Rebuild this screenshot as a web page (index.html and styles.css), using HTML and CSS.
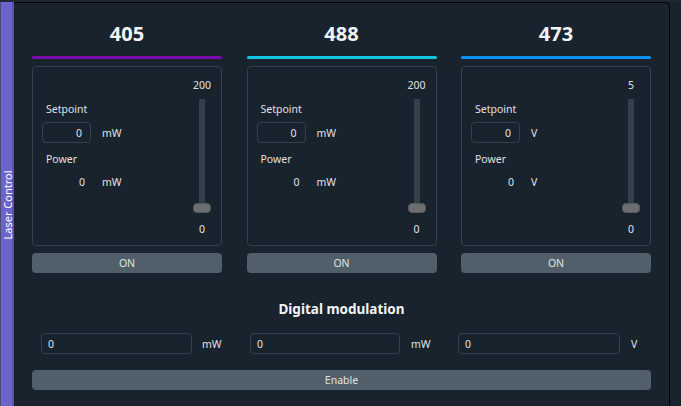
FILE: index.html
```html
<!DOCTYPE html>
<html>
<head>
<meta charset="utf-8">
<link rel="stylesheet" href="styles.css">
</head>
<body>
<div class="app">
  <div class="tab"><span class="tab-text">Laser Control</span></div>
  <div class="panel">
    <div class="lasers">
      <div class="laser">
        <div class="title">405</div>
        <div class="bar bar-405"></div>
        <div class="group">
          <div class="left">
            <div class="lbl setpoint">Setpoint</div>
            <div class="row">
              <div class="spin">0</div>
              <span class="unit">mW</span>
            </div>
            <div class="lbl power">Power</div>
            <div class="row prow">
              <div class="pval">0</div>
              <span class="unit">mW</span>
            </div>
          </div>
          <div class="slider">
            <div class="smax">200</div>
            <div class="groove"><div class="handle"></div></div>
            <div class="smin">0</div>
          </div>
        </div>
        <div class="btn on">ON</div>
      </div>
      <div class="laser">
        <div class="title">488</div>
        <div class="bar bar-488"></div>
        <div class="group">
          <div class="left">
            <div class="lbl setpoint">Setpoint</div>
            <div class="row">
              <div class="spin">0</div>
              <span class="unit">mW</span>
            </div>
            <div class="lbl power">Power</div>
            <div class="row prow">
              <div class="pval">0</div>
              <span class="unit">mW</span>
            </div>
          </div>
          <div class="slider">
            <div class="smax">200</div>
            <div class="groove"><div class="handle"></div></div>
            <div class="smin">0</div>
          </div>
        </div>
        <div class="btn on">ON</div>
      </div>
      <div class="laser">
        <div class="title">473</div>
        <div class="bar bar-473"></div>
        <div class="group">
          <div class="left">
            <div class="lbl setpoint">Setpoint</div>
            <div class="row">
              <div class="spin">0</div>
              <span class="unit">V</span>
            </div>
            <div class="lbl power">Power</div>
            <div class="row prow">
              <div class="pval">0</div>
              <span class="unit">V</span>
            </div>
          </div>
          <div class="slider">
            <div class="smax">5</div>
            <div class="groove"><div class="handle"></div></div>
            <div class="smin">0</div>
          </div>
        </div>
        <div class="btn on">ON</div>
      </div>
    </div>
    <div class="dm-title">Digital modulation</div>
    <div class="dm-row">
      <div class="dm-cell c1"><div class="dm-in w1">0</div><span class="dm-unit">mW</span></div>
      <div class="dm-cell c2"><div class="dm-in w2">0</div><span class="dm-unit">mW</span></div>
      <div class="dm-cell c3"><div class="dm-in w3">0</div><span class="dm-unit">V</span></div>
    </div>
    <div class="btn enable">Enable</div>
  </div>
</div>
</body>
</html>
```
FILE: styles.css
```css
html, body {
  margin: 0;
  padding: 0;
  background: #19232d;
  width: 681px;
  height: 406px;
  overflow: hidden;
}
body {
  font-family: "Noto Sans", "Open Sans", sans-serif;
  font-size: 10.5px;
  color: #e0e1e3;
}
.app {
  display: flex;
  height: 406px;
  border-top: 2px solid #1f2830;
  box-sizing: border-box;
}
.tab {
  width: 14px;
  box-sizing: border-box;
  background: #6c63cb;
  border-left: 1px solid #4b4a78;
  border-right: 2px solid #5c50b6;
  display: flex;
  align-items: center;
  justify-content: center;
}
.tab-text {
  display: block;
  transform: rotate(-90deg);
  white-space: nowrap;
  color: #ffffff;
  font-size: 11px;
  line-height: 12px;
  margin-left: 2px;
  margin-top: 2px;
}
.panel {
  width: 656px;
  box-sizing: border-box;
  border-top: 1px solid #000;
  border-right: 1px solid #000;
  border-top-right-radius: 5px;
  padding: 19px 18px 0 18px;
  display: flex;
  flex-direction: column;
}
.lasers {
  display: grid;
  grid-template-columns: 190px 190px 190px;
  column-gap: 24.5px;
}
.laser {
  display: flex;
  flex-direction: column;
}
.title {
  text-align: center;
  font-weight: bold;
  font-size: 20px;
  line-height: 24px;
  color: #f2f3f4;
}
.bar {
  height: 3px;
  border-radius: 2px;
  margin-top: 10px;
}
.bar-405 { background: #7a0bab; }
.bar-488 { background: #0fc6e0; }
.bar-473 { background: #0b90f0; }
.group {
  margin-top: 7px;
  height: 180px;
  box-sizing: border-box;
  border: 1px solid #32414b;
  border-radius: 4px;
  display: flex;
}
.left {
  flex: 1;
  padding-left: 9px;
  display: flex;
  flex-direction: column;
}
.lbl {
  line-height: 16px;
  padding-left: 4px;
}
.setpoint { margin-top: 34px; }
.power { margin-top: 8px; }
.row {
  display: flex;
  align-items: center;
  margin-top: 5px;
}
.prow { margin-top: 7px; line-height: 16px; }
.spin {
  width: 49px;
  height: 21px;
  box-sizing: border-box;
  border: 1px solid #32414b;
  border-radius: 4px;
  text-align: right;
  padding-right: 8px;
  line-height: 20px;
}
.pval {
  width: 49px;
  box-sizing: border-box;
  text-align: right;
  padding-right: 6px;
}
.unit {
  margin-left: 11px;
}
.slider {
  width: 30px;
  margin-right: 4px;
  display: flex;
  flex-direction: column;
  align-items: center;
}
.smax {
  margin-top: 10px;
  line-height: 17px;
}
.groove {
  position: relative;
  margin-top: 5px;
  width: 6px;
  height: 113px;
  background: #32414b;
}
.handle {
  position: absolute;
  left: -6px;
  bottom: -1px;
  width: 18px;
  height: 10px;
  box-sizing: border-box;
  border-radius: 4px;
  background: #6b6d6e;
  border: 1px solid #55595c;
}
.smin {
  margin-top: 9px;
  line-height: 17px;
}
.btn {
  background: #505f69;
  border-radius: 4px;
  height: 20px;
  line-height: 21px;
  text-align: center;
  color: #e0e1e3;
}
.on { margin-top: 7px; }
.dm-title {
  margin-top: 26px;
  text-align: center;
  font-weight: bold;
  font-size: 13.5px;
  line-height: 21px;
  color: #f2f3f4;
}
.dm-row {
  margin-top: 13px;
  display: flex;
  align-items: center;
  padding-left: 9px;
}
.dm-cell {
  display: flex;
  align-items: center;
}
.c1 { width: 209px; }
.c2 { width: 208px; }
.dm-in {
  height: 21px;
  box-sizing: border-box;
  border: 1px solid #32414b;
  border-radius: 4px;
  padding-left: 6px;
  line-height: 20px;
}
.w1 { width: 151px; }
.w2 { width: 150px; }
.w3 { width: 162px; }
.dm-unit { margin-left: 10px; }
.c2 .dm-unit, .c3 .dm-unit { margin-left: 11px; }
.enable { margin-top: 16px; }
```
